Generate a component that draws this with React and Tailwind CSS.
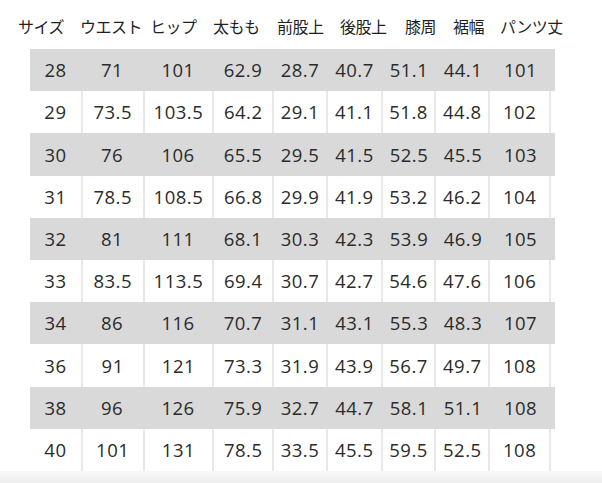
const headers = [
  { label: "サイズ", w: "w-[62px]" },
  { label: "ウエスト", w: "w-[70px]" },
  { label: "ヒップ", w: "w-[63px]" },
  { label: "太もも", w: "w-[64px]" },
  { label: "前股上", w: "w-[63px]" },
  { label: "後股上", w: "w-[65px]" },
  { label: "膝周", w: "w-[48px]" },
  { label: "裾幅", w: "w-[47px]" },
  { label: "パンツ丈", w: "w-[70px]" },
];

const widths = ["w-[51px]", "w-[62px]", "w-[70px]", "w-[60px]", "w-[54px]", "w-[55px]", "w-[54px]", "w-[54px]", "w-[61px]"];

const rows = [
  ["28", "71", "101", "62.9", "28.7", "40.7", "51.1", "44.1", "101"],
  ["29", "73.5", "103.5", "64.2", "29.1", "41.1", "51.8", "44.8", "102"],
  ["30", "76", "106", "65.5", "29.5", "41.5", "52.5", "45.5", "103"],
  ["31", "78.5", "108.5", "66.8", "29.9", "41.9", "53.2", "46.2", "104"],
  ["32", "81", "111", "68.1", "30.3", "42.3", "53.9", "46.9", "105"],
  ["33", "83.5", "113.5", "69.4", "30.7", "42.7", "54.6", "47.6", "106"],
  ["34", "86", "116", "70.7", "31.1", "43.1", "55.3", "48.3", "107"],
  ["36", "91", "121", "73.3", "31.9", "43.9", "56.7", "49.7", "108"],
  ["38", "96", "126", "75.9", "32.7", "44.7", "58.1", "51.1", "108"],
  ["40", "101", "131", "78.5", "33.5", "45.5", "59.5", "52.5", "108"],
];

export default function App() {
  return (
    <div
      className="w-[602px] h-[483px] bg-white text-[#333] flex flex-col overflow-hidden"
      style={{ fontFamily: '"Noto Sans CJK JP", "Noto Sans", sans-serif' }}
    >
      <div className="h-[49px] flex items-center pl-[18px] pt-[3px] text-[16px] tracking-[-0.5px] text-[#1f1f1f]">
        {headers.map((h) => (
          <span key={h.label} className={`${h.w} shrink-0 whitespace-nowrap`}>
            {h.label}
          </span>
        ))}
      </div>

      <div
        className="ml-[30px] flex flex-col"
        style={{ fontFamily: '"Open Sans", "Noto Sans", sans-serif' }}
      >
        {rows.map((row, i) => (
          <div
            key={row[0]}
            className={`flex h-[42.2px] ${i % 2 === 0 ? "bg-[#d9d9d9] w-[525px]" : "bg-white w-[521px] border-r-2 border-[#e8e8e8]"}`}
          >
            {row.map((cell, j) => (
              <div
                key={j}
                className={`${widths[j]} flex items-center justify-center text-[18.5px] tracking-[0.5px] text-[#2b2b2b] ${
                  i % 2 === 1 && j > 0 ? "border-l-2 border-[#e8e8e8]" : ""
                }`}
              >
                {cell}
              </div>
            ))}
          </div>
        ))}
      </div>

      <div className="mt-auto h-[12px] bg-gradient-to-b from-[#f8f8f8] to-[#eeeeee]" />
    </div>
  );
}
